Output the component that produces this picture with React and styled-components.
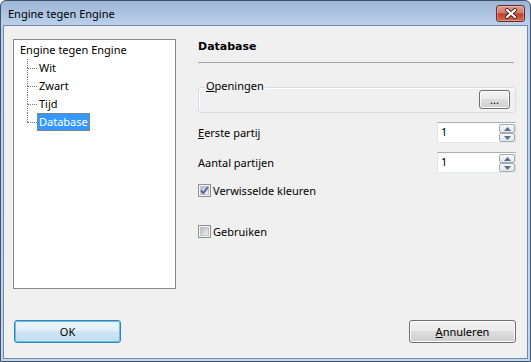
import React from 'react';
import styled, { createGlobalStyle } from 'styled-components';

const GlobalStyle = createGlobalStyle`
  * { box-sizing: border-box; }
  html, body { margin: 0; padding: 0; background: #ffffff; }
  body {
    font-family: "Noto Sans", "Segoe UI", sans-serif;
    font-size: 11px;
    color: #000;
  }
`;

const Frame = styled.div`
  width: 531px;
  height: 362px;
  display: flex;
  flex-direction: column;
  border: 1px solid #3f536c;
  border-radius: 6px 6px 0 0;
  padding: 0 2px 2px;
  background: linear-gradient(#9db6d5, #bad0ea 24px, #c2d6ee);
  overflow: hidden;
`;

const TitleBar = styled.div`
  height: 24px;
  display: flex;
  align-items: flex-start;
  padding-left: 5px;
  flex-shrink: 0;
`;

const Title = styled.span`
  padding-top: 5px;
  line-height: 15px;
  color: #000;
`;

const CloseButton = styled.div`
  margin: 4px 3px 0 auto;
  width: 29px;
  height: 17px;
  border: 1px solid #6b2a26;
  border-radius: 3px;
  background: linear-gradient(#dd9a90, #d07b6c 45%, #c2402c 52%, #cf6a52);
  box-shadow: inset 0 0 0 1px rgba(255, 255, 255, 0.3);
  display: flex;
  align-items: center;
  justify-content: center;
`;

const Client = styled.div`
  flex: 1;
  display: flex;
  flex-direction: column;
  border: 1px solid #6e89ad;
  background: #f0f0f0;
  padding: 13px 11px 15px 9px;
`;

const Main = styled.div`
  display: flex;
  align-items: flex-start;
`;

const Tree = styled.div`
  width: 163px;
  height: 250px;
  flex-shrink: 0;
  background: #fff;
  border: 1px solid #828790;
  padding: 1px 0 0 4px;
`;

const Node = styled.div`
  display: flex;
  align-items: center;
  height: 18px;
`;

const NodeLabel = styled.span`
  line-height: 16px;
  padding: 0 1px;
  white-space: nowrap;
  border: 1px dotted ${(p) => (p.$selected ? '#c4701f' : 'transparent')};
  background: ${(p) => (p.$selected ? '#3399ff' : 'transparent')};
  color: ${(p) => (p.$selected ? '#fff' : '#000')};
`;

const Children = styled.div`
  margin-left: 9px;
`;

const Connector = styled.span`
  display: flex;
  flex-direction: column;
  align-self: stretch;
  width: 10px;
  flex-shrink: 0;

  &::before {
    content: '';
    height: 9px;
    border-left: 1px dotted #7a7a7a;
  }

  &::after {
    content: '';
    flex: 1;
    border-top: 1px dotted #7a7a7a;
    border-left: ${(p) => (p.$last ? '0' : '1px dotted #7a7a7a')};
  }
`;

const Panel = styled.div`
  flex: 1;
  display: flex;
  flex-direction: column;
  margin-left: 22px;
`;

const Heading = styled.div`
  font-family: "DejaVu Sans", Tahoma, sans-serif;
  font-weight: bold;
  font-size: 11px;
  line-height: 16px;
`;

const Rule = styled.div`
  height: 1px;
  margin: 7px 2px 0 0;
  background: #a0a0a0;
`;

const Group = styled.div`
  margin-top: 24px;
  display: flex;
  align-items: flex-start;
  padding: 2px 5px 3px 6px;
  border: 1px solid #d5dfe5;
  border-radius: 3px;
  box-shadow: inset 1px 1px 0 #fff;
`;

const Legend = styled.span`
  margin-top: -12px;
  padding: 0 1px;
  line-height: 15px;
  background: #f0f0f0;
`;

const FieldRow = styled.div`
  display: flex;
  align-items: center;
  justify-content: space-between;
  margin-top: 9px;
  line-height: 15px;
`;

const Spin = styled.div`
  width: 79px;
  height: 21px;
  display: flex;
  background: #fff;
  border: 1px solid;
  border-color: #abadb3 #dbdfe6 #e3e9ef #e2e3ea;
`;

const SpinValue = styled.span`
  flex: 1;
  padding-left: 3px;
  line-height: 17px;
`;

const SpinButtons = styled.div`
  width: 16px;
  display: flex;
  flex-direction: column;
  padding-top: 1px;
`;

const SpinButton = styled.div`
  height: 9px;
  display: flex;
  align-items: center;
  justify-content: center;
  border: 1px solid #a5a9b0;
  border-radius: 2px;
  background: linear-gradient(#f7f7f7, #e3e5e8);
`;

const CheckRow = styled.div`
  display: flex;
  align-items: center;
  gap: 2px;
  height: 17px;
  margin-top: ${(p) => p.$gap}px;
  line-height: 15px;
`;

const Footer = styled.div`
  margin-top: auto;
  display: flex;
  justify-content: space-between;
  padding-left: 1px;
`;

const Button = styled.button`
  font: inherit;
  color: #000;
  width: ${(p) => p.$w}px;
  height: ${(p) => p.$h}px;
  padding: 0;
  border-radius: 3px;
  border: 1px solid ${(p) => (p.$default ? '#3c7fb1' : '#707070')};
  background: ${(p) =>
    p.$default
      ? 'linear-gradient(#edf5fb, #e1eef7 50%, #d0e5f3 50%, #c3ddef)'
      : 'linear-gradient(#f2f2f2, #ebebeb 50%, #dddddd 50%, #cfcfcf)'};
  box-shadow: inset 0 0 0 1px ${(p) => (p.$default ? '#5cc4ee' : '#fcfcfc')};
  line-height: 15px;
`;

const BrowseButton = styled(Button)`
  margin-left: auto;
`;

const CloseGlyph = () => (
  <svg width="14" height="11" viewBox="0 0 14 11">
    <path d="M3 2 L11 9 M11 2 L3 9" stroke="#4a2420" strokeWidth="4" strokeLinecap="round" fill="none" />
    <path d="M3 2 L11 9 M11 2 L3 9" stroke="#ffffff" strokeWidth="2.2" strokeLinecap="round" fill="none" />
  </svg>
);

const Arrow = ({ up }) => (
  <svg width="7" height="4" viewBox="0 0 7 4">
    <path d={up ? 'M0 4 L3.5 0 L7 4 Z' : 'M0 0 L3.5 4 L7 0 Z'} fill="#5a6f97" />
  </svg>
);

const CheckBox = ({ checked, id }) => (
  <svg width="13" height="13" viewBox="0 0 13 13">
    <defs>
      <linearGradient id={id} x1="0" y1="0" x2="1" y2="1">
        <stop offset="0" stopColor="#b3b8bf" />
        <stop offset="1" stopColor="#f3f3f3" />
      </linearGradient>
    </defs>
    <rect x="0.5" y="0.5" width="12" height="12" fill="#f4f4f4" stroke="#8e8f8f" />
    <rect x="2.5" y="2.5" width="8" height="8" fill={`url(#${id})`} stroke="#c0c4ca" />
    {checked && (
      <path d="M3 6.3 L5.3 9 L10 3" stroke="#4a62a0" strokeWidth="1.8" fill="none" />
    )}
  </svg>
);

const SpinBox = ({ value }) => (
  <Spin>
    <SpinValue>{value}</SpinValue>
    <SpinButtons>
      <SpinButton><Arrow up /></SpinButton>
      <SpinButton><Arrow /></SpinButton>
    </SpinButtons>
  </Spin>
);

const children = ['Wit', 'Zwart', 'Tijd', 'Database'];

export default function App() {
  return (
    <>
      <GlobalStyle />
      <Frame>
        <TitleBar>
          <Title>Engine tegen Engine</Title>
          <CloseButton><CloseGlyph /></CloseButton>
        </TitleBar>
        <Client>
          <Main>
            <Tree>
              <Node><NodeLabel>Engine tegen Engine</NodeLabel></Node>
              <Children>
                {children.map((c, i) => (
                  <Node key={c}>
                    <Connector $last={i === children.length - 1} />
                    <NodeLabel $selected={c === 'Database'}>{c}</NodeLabel>
                  </Node>
                ))}
              </Children>
            </Tree>
            <Panel>
              <Heading>Database</Heading>
              <Rule />
              <Group>
                <Legend><u>O</u>peningen</Legend>
                <BrowseButton $w={31} $h={19}>...</BrowseButton>
              </Group>
              <FieldRow>
                <span><u>E</u>erste partij</span>
                <SpinBox value="1" />
              </FieldRow>
              <FieldRow>
                <span>Aantal partijen</span>
                <SpinBox value="1" />
              </FieldRow>
              <CheckRow $gap={9}>
                <CheckBox id="cb1" checked />
                <span>Verwisselde kleuren</span>
              </CheckRow>
              <CheckRow $gap={24}>
                <CheckBox id="cb2" />
                <span>Gebruiken</span>
              </CheckRow>
            </Panel>
          </Main>
          <Footer>
            <Button $default $w={107} $h={23}>OK</Button>
            <Button $w={107} $h={23}><u>A</u>nnuleren</Button>
          </Footer>
        </Client>
      </Frame>
    </>
  );
}
